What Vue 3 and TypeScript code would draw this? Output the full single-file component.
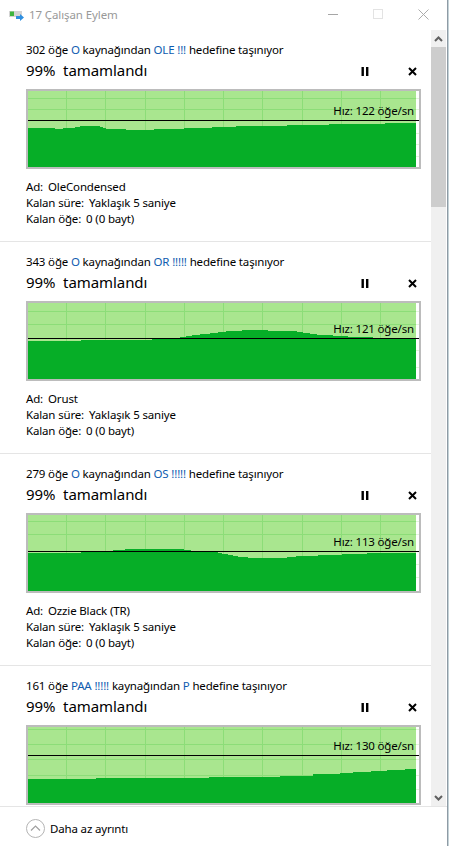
<template>
  <div class="screen">
    <div class="window">
      <header class="titlebar">
        <svg class="app-icon" width="16" height="12" viewBox="0 0 16 12">
          <rect x="0" y="0" width="13" height="6" fill="#d4d4d4" />
          <rect x="1" y="0.5" width="4" height="4.5" fill="#3fb53f" />
          <path d="M7 5h4V3l4 3.5-4 3.5V8H7z" fill="#2f8fe0" />
        </svg>
        <span class="title">17 Çalışan Eylem</span>
        <div class="controls">
          <svg width="10" height="10" viewBox="0 0 10 10" class="ctl-min"><path d="M0 5.5h10" stroke="#a6a6a6" /></svg>
          <svg width="10" height="10" viewBox="0 0 10 10" class="ctl-max"><rect x="0.5" y="0.5" width="9" height="9" fill="none" stroke="#e3e3e3" /></svg>
          <svg width="11" height="11" viewBox="0 0 11 11" class="ctl-close"><path d="M0.5 0.5l10 10M10.5 0.5l-10 10" stroke="#ababab" /></svg>
        </div>
      </header>

      <div class="body">
        <div class="list">
          <section v-for="op in operations" :key="op.count" class="op">
            <p class="heading">
              {{ op.count }} öğe <span class="link">{{ op.from }}</span> kaynağından
              <span class="link">{{ op.to }}</span> hedefine taşınıyor
            </p>
            <div class="progress-row">
              <span class="percent">99%&nbsp; tamamlandı</span>
              <div class="actions">
                <svg width="8" height="9" viewBox="0 0 8 9"><path d="M0.5 0h2.4v9H0.5zM5 0h2.4v9H5z" fill="#000" /></svg>
                <svg width="9" height="9" viewBox="0 0 9 9"><path d="M1 1l7 7M8 1l-7 7" stroke="#000" stroke-width="2" /></svg>
              </div>
            </div>

            <div class="chart">
              <svg width="391" height="76" viewBox="0 0 391 76" shape-rendering="crispEdges">
                <rect width="388" height="76" fill="#a9e68f" />
                <line v-for="x in gridX" :key="x" :x1="x + 0.5" y1="0" :x2="x + 0.5" y2="76" stroke="#8cdd78" />
                <g v-for="y in op.gridY" :key="y">
                  <line x1="0" :y1="y + 0.5" x2="388" :y2="y + 0.5" stroke="#8cdd78" />
                  <line x1="388" :y1="y + 0.5" x2="391" :y2="y + 0.5" stroke="#e2f5da" />
                </g>
                <path :d="areaPath(op.steps)" fill="#06ae27" />
                <rect x="0" :y="op.lineY" width="391" height="1" fill="#000" />
              </svg>
              <span class="speed" :style="{ top: `${op.lineY - 17}px` }">Hız: {{ op.speed }} öğe/sn</span>
            </div>

            <dl v-if="op.name" class="details">
              <div><dt>Ad:</dt><dd>{{ op.name }}</dd></div>
              <div><dt>Kalan süre:</dt><dd>Yaklaşık 5 saniye</dd></div>
              <div><dt>Kalan öğe:</dt><dd>0 (0 bayt)</dd></div>
            </dl>
          </section>
        </div>

        <aside class="scrollbar">
          <button class="arrow">
            <svg width="9" height="6" viewBox="0 0 9 6"><path d="M1 5l3.5-3.5L8 5" fill="none" stroke="#606060" stroke-width="2" /></svg>
          </button>
          <div class="thumb"></div>
          <div class="track"></div>
          <button class="arrow">
            <svg width="9" height="6" viewBox="0 0 9 6"><path d="M1 1l3.5 3.5L8 1" fill="none" stroke="#606060" stroke-width="2" /></svg>
          </button>
        </aside>
      </div>

      <footer class="footer">
        <svg width="19" height="19" viewBox="0 0 19 19">
          <circle cx="9.5" cy="9.5" r="9" fill="#fff" stroke="#b4b4b4" />
          <path d="M5 11.5l4.5-4.5 4.5 4.5" fill="none" stroke="#a0a0a0" stroke-width="1.2" />
        </svg>
        <span>Daha az ayrıntı</span>
      </footer>
    </div>
    <div class="edge"></div>
  </div>
</template>

<script setup lang="ts">
type Step = [number, number]

interface Operation {
  count: number
  from: string
  to: string
  speed: number
  name?: string
  lineY: number
  gridY: number[]
  steps: Step[]
}

const gridX = [38, 77, 117, 156, 195, 234, 274, 313, 352]

const operations: Operation[] = [
  {
    count: 302,
    from: 'O',
    to: 'OLE !!!',
    speed: 122,
    name: 'OleCondensed',
    lineY: 29,
    gridY: [7, 18, 42, 53, 65],
    steps: [[0, 37], [27, 38], [35, 37], [47, 36], [52, 35], [65, 35], [72, 36], [75, 37], [78, 38], [98, 39], [126, 38], [156, 37], [184, 36], [208, 35], [259, 34], [301, 33], [357, 32]],
  },
  {
    count: 343,
    from: 'O',
    to: 'OR !!!!!',
    speed: 121,
    name: 'Orust',
    lineY: 35,
    gridY: [8, 21, 47, 64],
    steps: [[0, 38], [53, 37], [124, 36], [145, 35], [152, 34], [158, 33], [164, 32], [172, 31], [182, 30], [190, 29], [198, 28], [214, 27], [240, 28], [269, 29], [275, 30], [282, 31], [289, 32], [305, 33], [320, 34], [345, 35]],
  },
  {
    count: 279,
    from: 'O',
    to: 'OS !!!!!',
    speed: 113,
    name: 'Ozzie Black (TR)',
    lineY: 36,
    gridY: [6, 19, 49, 62],
    steps: [[0, 38], [53, 37], [70, 36], [85, 35], [97, 34], [156, 35], [163, 36], [184, 37], [190, 38], [194, 39], [200, 40], [205, 41], [210, 42], [220, 43], [259, 42], [268, 41], [290, 40], [314, 39], [339, 38]],
  },
  {
    count: 161,
    from: 'PAA !!!!!',
    to: 'P',
    speed: 130,
    lineY: 28,
    gridY: [2, 17, 32, 48, 62],
    steps: [[0, 52], [68, 51], [181, 50], [252, 49], [285, 47], [312, 46], [325, 45], [343, 44], [359, 43], [377, 42]],
  },
]

// stepped top edge, closed along the bottom of the chart
function areaPath(steps: Step[]) {
  const top = steps.map(([x, y]) => `H${x}V${y}`).join('')
  return `M0 76${top}H388V76Z`
}
</script>

<style>
html,
body {
  margin: 0;
  background: #fff;
}
</style>

<style scoped>
.screen {
  display: flex;
  width: 449px;
  height: 846px;
  overflow: hidden;
  font-family: "Noto Sans", "Open Sans", sans-serif;
  font-size: 11.5px;
  letter-spacing: -0.16px;
  color: #000;
}

.window {
  display: flex;
  flex-direction: column;
  width: 447px;
  background: #fff;
}

.edge {
  width: 1px;
  flex: none;
  background: #8f9ba5;
  box-shadow: 1px 0 0 #c4d3d8;
}

.titlebar {
  box-sizing: border-box;
  display: flex;
  align-items: center;
  flex: none;
  height: 30px;
  padding: 0 0 2px 9px;
}

.app-icon {
  margin-top: 6px;
}

.title {
  margin-left: 4px;
  color: #999;
  letter-spacing: -0.1px;
}

.controls {
  display: flex;
  align-items: center;
  margin-left: auto;
  margin-right: 18px;
}

.ctl-max {
  margin-left: 35px;
}

.ctl-close {
  margin-left: 35px;
}

.body {
  display: flex;
  flex: 1;
  min-height: 0;
}

.list {
  flex: 1;
  overflow: hidden;
}

.op {
  box-sizing: border-box;
  height: 212px;
  padding: 12px 0 0 26px;
  border-bottom: 1px solid #e5e5e5;
}

.heading {
  margin: 0;
  height: 16px;
  line-height: 16px;
  white-space: nowrap;
}

.link {
  color: #0f5cb0;
}

.progress-row {
  display: flex;
  align-items: center;
  justify-content: space-between;
  height: 22px;
  margin-top: 2px;
}

.percent {
  padding-bottom: 2px;
  font-size: 15px;
  line-height: 20px;
  letter-spacing: -0.07px;
}

.actions {
  display: flex;
  align-items: center;
  gap: 39px;
  margin-right: 14px;
}

.chart {
  position: relative;
  box-sizing: border-box;
  width: 395px;
  height: 80px;
  margin-top: 7px;
  border: 2px solid #bcbcbc;
}

.chart svg {
  display: block;
}

.speed {
  position: absolute;
  right: 5px;
  line-height: 16px;
  white-space: nowrap;
}

.details {
  margin: 10px 0 0;
}

.details div {
  display: flex;
  height: 16px;
  line-height: 16px;
}

.details dd {
  margin: 0 0 0 5px;
}

.scrollbar {
  display: flex;
  flex-direction: column;
  flex: none;
  width: 15px;
  background: #f0f0f0;
  margin-right: 1px;
}

.arrow {
  display: flex;
  align-items: center;
  justify-content: center;
  flex: none;
  height: 17px;
  padding: 0;
  border: 0;
  background: #f0f0f0;
}

.thumb {
  flex: none;
  height: 160px;
  background: #cdcdcd;
}

.track {
  flex: 1;
}

.footer {
  box-sizing: border-box;
  display: flex;
  align-items: center;
  flex: none;
  gap: 5px;
  height: 40px;
  padding: 4px 0 0 26px;
  border-top: 1px solid #e5e5e5;
}
</style>
